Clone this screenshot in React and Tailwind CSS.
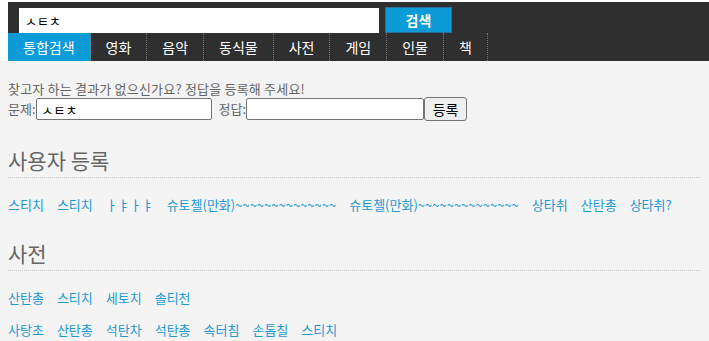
import React from "react";

const tabs = ["통합검색", "영화", "음악", "동식물", "사전", "게임", "인물", "책"];

const userWords = [
    "스티치",
    "스티치",
    "ㅏㅑㅏㅑ",
    "슈토첼(만화)~~~~~~~~~~~~~~",
    "슈토첼(만화)~~~~~~~~~~~~~~",
    "상타취",
    "산탄총",
    "상타취?",
];

const dictRows = [
    ["산탄총", "스티치", "세토치", "솔티천"],
    ["사탕초", "산탄총", "석탄차", "석탄총", "속터침", "손톱칠", "스티치"],
];

function WordRow({ words }) {
    return (
        <div className="flex gap-[13px] text-[13px] leading-[32px] whitespace-nowrap">
            {words.map((w, i) => (
                <a key={i} href="#" className="text-[#1d9ad6]">{w}</a>
            ))}
        </div>
    );
}

export default function App() {
    return (
        <div className="min-h-screen bg-[#f4f4f4] font-['Noto_Sans_CJK_KR','Noto_Sans',sans-serif] text-[#666]">
            {/* header */}
            <div className="bg-white pt-[2px] pl-[8px]">
                <div className="bg-[#2f2f2f]">
                    <div className="flex items-end gap-[6px] pl-[11px] pt-[5px]">
                        <input
                            defaultValue="ㅅㅌㅊ"
                            className="w-[360px] h-[25px] bg-white px-[6px] text-[13px] text-black outline-none"
                        />
                        <button className="w-[67px] h-[26px] bg-[#0b9bd7] border border-[#2a6f96] text-white text-[14px] font-bold">
                            검색
                        </button>
                    </div>
                    <nav className="flex h-[28px]">
                        {tabs.map((t, i) => (
                            <a
                                key={t}
                                href="#"
                                className={
                                    "flex items-center px-[15px] text-[14px] text-white border-r border-dotted border-[#777] " +
                                    (i === 0 ? "bg-[#0b9bd7]" : "")
                                }
                            >
                                {t}
                            </a>
                        ))}
                    </nav>
                </div>
            </div>

            {/* content */}
            <div className="px-[8px] pt-[20px]">
                <p className="text-[13px] leading-[16px] tracking-[0.2px]">찾고자 하는 결과가 없으신가요? 정답을 등록해 주세요!</p>
                <div className="flex items-center text-[13px] h-[24px]">
                    <span>문제:</span>
                    <input
                        defaultValue="ㅅㅌㅊ"
                        className="w-[176px] h-[22px] border border-[#767676] rounded-[2px] bg-white px-[5px] text-[13px] text-black"
                    />
                    <span className="ml-[7px]">정답:</span>
                    <input className="w-[178px] h-[22px] border border-[#767676] rounded-[2px] bg-white px-[5px] text-[13px] text-black" />
                    <button className="w-[43px] h-[24px] border border-[#767676] rounded-[3px] bg-[#efefef] text-[14px] text-black">
                        등록
                    </button>
                </div>

                <h2 className="mt-[25px] text-[21px] leading-[28px] pb-[3px] border-b border-dotted border-[#c8c8c8]">사용자 등록</h2>
                <div className="mt-[11px]">
                    <WordRow words={userWords} />
                </div>

                <h2 className="mt-[18px] text-[21px] leading-[28px] pb-[3px] border-b border-dotted border-[#c8c8c8]">사전</h2>
                <div className="mt-[11px]">
                    {dictRows.map((r, i) => (
                        <WordRow key={i} words={r} />
                    ))}
                </div>
            </div>
        </div>
    );
}
